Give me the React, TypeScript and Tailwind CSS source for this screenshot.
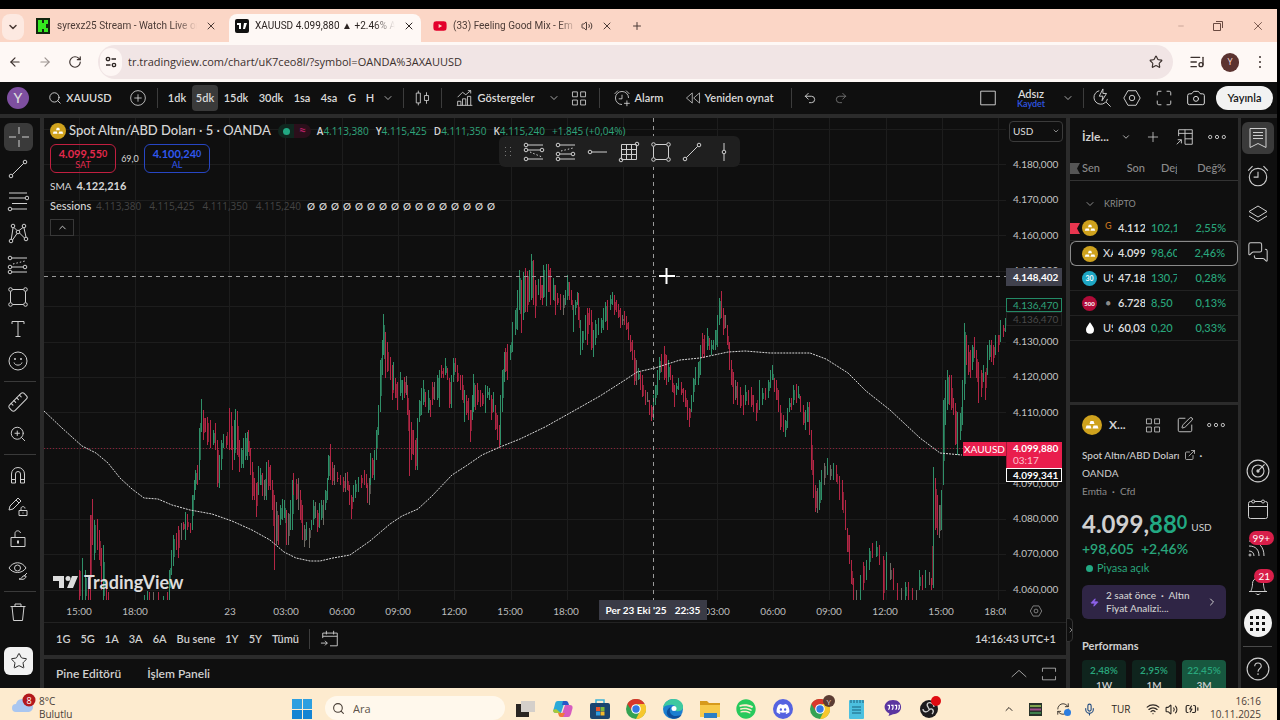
import React from "react";
import {
  ArrowLeft, ArrowRight, BatteryCharging, Camera, ChevronDown, ChevronRight, ChevronUp,
  ExternalLink, ListMusic, Maximize, MessagesSquare, Mic, Minus, Plus,
  Redo2, RefreshCw, RotateCw, Ruler, Search, SquarePen, Star, Undo2, Volume2, Wifi, X, ZoomIn, Zap,
} from "lucide-react";
import { FaDiscord, FaSpotify, FaYoutube } from "react-icons/fa";

type Dir = "g" | "r" | "n";
type Bar = [number, number, number, Dir];

// x, high, low, direction
const BARS: Bar[] = [
  [79, 570, 600, "r"], [82, 558, 600, "g"], [85, 570, 600, "g"], [88, 578, 600, "r"], [90, 515, 600, "r"], [92, 499, 545, "r"],
  [94, 520, 560, "g"], [97, 519, 550, "r"], [99, 530, 560, "r"], [101, 548, 590, "r"], [103, 545, 600, "g"], [106, 580, 600, "r"], [108, 592, 600, "r"],
  [144, 595, 600, "g"], [147, 591, 600, "g"], [149, 592, 600, "r"], [153, 592, 600, "n"], [158, 592, 600, "r"], [163, 596, 600, "g"], [167, 592, 600, "r"],
  [169, 570, 600, "g"], [171, 550, 575, "g"], [173, 535, 566, "g"], [176, 533, 550, "r"], [178, 526, 558, "r"], [181, 523, 540, "n"], [183, 522, 530, "r"],
  [185, 512, 540, "g"], [187, 514, 530, "r"], [190, 523, 533, "r"], [192, 495, 530, "g"], [194, 480, 500, "g"], [195, 470, 490, "g"], [197, 465, 485, "r"],
  [199, 428, 480, "g"], [201, 399, 432, "g"], [203, 410, 440, "r"], [205, 418, 432, "r"], [207, 417, 445, "r"], [210, 420, 448, "r"], [213, 430, 445, "g"],
  [215, 423, 450, "r"], [217, 440, 487, "r"], [219, 455, 488, "g"], [221, 440, 470, "g"], [223, 434, 448, "g"], [226, 436, 448, "r"], [229, 408, 450, "r"],
  [231, 412, 450, "r"], [232, 440, 470, "r"], [234, 420, 460, "g"], [235, 409, 450, "g"], [237, 411, 455, "r"], [239, 440, 472, "r"], [241, 448, 468, "g"],
  [243, 438, 468, "g"], [245, 433, 460, "g"], [247, 432, 460, "g"], [248, 430, 452, "r"], [250, 448, 475, "r"], [252, 462, 500, "r"], [254, 478, 500, "r"],
  [256, 483, 517, "r"], [258, 466, 495, "g"], [260, 468, 485, "g"], [262, 473, 496, "r"], [264, 480, 500, "n"], [266, 462, 500, "g"], [268, 460, 490, "r"],
  [270, 465, 490, "r"], [272, 480, 510, "r"], [274, 495, 570, "r"], [276, 502, 545, "n"], [278, 515, 545, "r"], [280, 505, 525, "g"], [282, 499, 520, "g"],
  [284, 500, 518, "g"], [286, 510, 545, "r"], [288, 513, 545, "n"], [290, 500, 530, "g"], [292, 480, 530, "g"], [293, 473, 495, "r"], [296, 479, 500, "r"],
  [298, 478, 510, "n"], [300, 490, 520, "r"], [302, 505, 540, "r"], [304, 525, 547, "n"], [306, 522, 540, "g"], [309, 528, 548, "n"], [311, 520, 530, "g"],
  [313, 500, 525, "g"], [315, 502, 518, "n"], [317, 510, 532, "r"], [319, 503, 528, "g"], [321, 500, 520, "g"], [323, 500, 525, "n"], [325, 490, 510, "g"],
  [327, 478, 500, "g"], [328, 455, 480, "g"], [330, 444, 480, "r"], [332, 462, 485, "r"], [334, 465, 485, "n"], [337, 472, 482, "r"], [340, 475, 485, "r"],
  [343, 477, 492, "r"], [345, 473, 492, "n"], [347, 472, 490, "r"], [349, 485, 505, "r"], [351, 495, 519, "r"], [353, 485, 502, "g"], [355, 480, 498, "g"],
  [358, 477, 492, "g"], [361, 475, 488, "r"], [364, 470, 485, "r"], [366, 474, 488, "r"], [367, 485, 503, "r"], [369, 478, 505, "n"], [370, 453, 485, "g"],
  [372, 458, 478, "r"], [374, 450, 480, "g"], [376, 430, 460, "g"], [378, 405, 435, "g"], [380, 360, 412, "g"], [382, 340, 375, "g"], [383, 314, 355, "g"],
  [385, 332, 378, "r"], [387, 342, 372, "r"], [390, 357, 380, "r"], [392, 365, 400, "r"], [393, 362, 390, "g"], [395, 378, 398, "r"], [397, 382, 410, "r"],
  [400, 372, 396, "g"], [402, 380, 400, "g"], [404, 377, 398, "r"], [406, 376, 395, "n"], [407, 385, 415, "r"], [409, 410, 476, "r"], [411, 422, 460, "r"],
  [413, 430, 455, "r"], [415, 440, 470, "r"], [417, 418, 470, "g"], [419, 400, 422, "g"], [421, 388, 415, "g"], [423, 380, 405, "g"], [425, 392, 407, "r"],
  [428, 390, 413, "g"], [430, 400, 417, "r"], [432, 382, 405, "r"], [434, 382, 400, "n"], [437, 375, 400, "g"], [439, 370, 407, "g"], [441, 365, 378, "r"],
  [443, 368, 378, "r"], [445, 358, 375, "g"], [447, 368, 380, "r"], [449, 378, 408, "r"], [451, 375, 408, "g"], [453, 358, 382, "g"], [455, 358, 372, "r"],
  [457, 365, 382, "r"], [460, 375, 390, "r"], [462, 375, 400, "r"], [464, 390, 422, "g"], [466, 395, 415, "r"], [468, 398, 420, "r"], [470, 410, 442, "r"],
  [472, 395, 420, "g"], [473, 374, 412, "g"], [475, 385, 410, "r"], [477, 383, 405, "r"], [480, 390, 407, "r"], [482, 393, 406, "r"], [485, 385, 413, "g"],
  [487, 386, 398, "g"], [489, 388, 400, "g"], [491, 395, 420, "r"], [493, 392, 412, "g"], [495, 405, 430, "r"], [497, 415, 440, "r"], [499, 425, 448, "r"],
  [500, 395, 445, "g"], [502, 370, 412, "g"], [504, 352, 382, "g"], [505, 348, 372, "r"], [507, 344, 380, "r"], [510, 345, 360, "g"], [512, 322, 352, "g"],
  [515, 310, 335, "g"], [517, 290, 330, "g"], [519, 270, 310, "g"], [521, 280, 333, "r"], [523, 272, 320, "g"], [525, 268, 312, "r"], [527, 271, 312, "r"],
  [529, 270, 302, "g"], [531, 254, 300, "g"], [533, 260, 305, "r"], [535, 280, 318, "r"], [538, 279, 295, "g"], [540, 277, 300, "r"], [542, 285, 305, "r"],
  [543, 265, 298, "g"], [546, 264, 306, "g"], [548, 264, 292, "r"], [550, 268, 305, "r"], [553, 278, 300, "g"], [555, 285, 315, "r"], [557, 293, 305, "r"],
  [560, 294, 310, "r"], [563, 295, 315, "n"], [565, 290, 305, "g"], [567, 275, 300, "g"], [569, 282, 300, "r"], [571, 290, 305, "r"], [573, 305, 332, "g"],
  [575, 300, 315, "g"], [577, 292, 305, "g"], [578, 293, 320, "r"], [580, 320, 355, "g"], [582, 331, 350, "g"], [585, 315, 340, "g"], [587, 308, 345, "r"],
  [589, 308, 325, "r"], [591, 310, 350, "r"], [593, 330, 357, "g"], [595, 320, 345, "g"], [598, 318, 335, "g"], [601, 318, 333, "g"], [603, 308, 330, "g"],
  [605, 302, 322, "g"], [607, 300, 330, "r"], [610, 295, 310, "g"], [612, 292, 305, "g"], [614, 295, 315, "r"], [616, 300, 312, "r"], [618, 304, 318, "r"],
  [620, 308, 328, "r"], [622, 315, 325, "n"], [624, 311, 325, "r"], [626, 316, 330, "r"], [628, 322, 340, "r"], [630, 335, 352, "r"], [632, 340, 360, "r"],
  [634, 350, 385, "r"], [636, 360, 385, "n"], [638, 368, 380, "g"], [640, 372, 390, "r"], [642, 375, 397, "r"], [645, 390, 405, "r"], [647, 392, 402, "n"],
  [649, 400, 415, "r"], [651, 405, 421, "r"], [653, 395, 420, "g"], [655, 385, 405, "g"], [657, 370, 395, "g"], [659, 357, 380, "g"], [661, 354, 372, "r"],
  [664, 346, 380, "r"], [666, 355, 385, "r"], [668, 360, 382, "g"], [670, 365, 380, "r"], [672, 375, 392, "r"], [674, 385, 407, "r"], [676, 383, 395, "g"],
  [678, 378, 390, "g"], [681, 382, 395, "r"], [683, 388, 402, "r"], [685, 390, 407, "r"], [687, 400, 420, "r"], [689, 408, 427, "r"], [691, 395, 412, "g"],
  [693, 378, 402, "g"], [695, 367, 385, "g"], [698, 362, 385, "g"], [700, 345, 375, "g"], [702, 333, 358, "r"], [704, 335, 358, "r"], [707, 328, 350, "g"],
  [709, 338, 350, "r"], [711, 340, 355, "g"], [713, 340, 350, "g"], [715, 330, 350, "g"], [717, 315, 347, "g"], [719, 298, 325, "g"], [721, 291, 318, "r"],
  [723, 308, 335, "r"], [725, 315, 328, "n"], [727, 325, 345, "r"], [729, 342, 370, "r"], [731, 360, 385, "r"], [733, 372, 404, "r"], [735, 380, 400, "n"],
  [737, 382, 405, "r"], [740, 387, 408, "r"], [743, 395, 415, "r"], [745, 385, 405, "g"], [748, 390, 405, "r"], [751, 387, 407, "r"], [753, 395, 412, "r"],
  [756, 403, 421, "r"], [759, 380, 410, "g"], [762, 388, 405, "g"], [765, 388, 400, "r"], [768, 380, 398, "g"], [770, 370, 388, "g"], [772, 365, 380, "g"],
  [774, 378, 392, "r"], [776, 380, 400, "r"], [778, 390, 412, "r"], [780, 405, 430, "r"], [783, 415, 432, "r"], [785, 420, 437, "g"], [787, 408, 428, "g"],
  [789, 398, 412, "g"], [791, 398, 410, "r"], [793, 385, 405, "g"], [796, 384, 403, "r"], [798, 386, 398, "g"], [800, 396, 412, "r"], [803, 405, 425, "r"],
  [805, 410, 430, "g"], [807, 402, 422, "g"], [809, 402, 435, "r"], [811, 430, 470, "r"], [813, 460, 498, "r"], [815, 485, 512, "r"], [817, 488, 513, "n"],
  [819, 480, 510, "g"], [821, 470, 500, "g"], [824, 463, 485, "n"], [827, 458, 475, "g"], [830, 465, 480, "n"], [833, 463, 480, "g"], [836, 465, 482, "r"],
  [839, 476, 500, "r"], [842, 480, 510, "r"], [845, 500, 530, "r"], [847, 528, 552, "r"], [849, 535, 564, "r"], [851, 560, 584, "r"], [853, 578, 600, "r"],
  [856, 590, 600, "n"], [860, 575, 600, "g"], [863, 562, 590, "r"], [866, 560, 580, "g"], [869, 548, 570, "g"], [872, 543, 558, "r"], [876, 541, 557, "g"],
  [879, 545, 565, "r"], [883, 556, 600, "r"], [886, 552, 590, "g"], [890, 563, 580, "n"], [893, 568, 590, "r"], [897, 583, 600, "r"], [901, 588, 600, "n"],
  [905, 582, 600, "g"], [908, 582, 600, "r"], [912, 588, 600, "r"], [916, 590, 600, "n"], [919, 570, 590, "g"], [922, 575, 590, "r"], [925, 570, 588, "g"],
  [929, 572, 585, "n"], [931, 578, 590, "r"], [933, 467, 588, "g"], [935, 478, 530, "r"], [937, 495, 535, "r"], [939, 505, 538, "n"], [941, 490, 530, "g"],
  [943, 400, 485, "g"], [945, 380, 425, "g"], [947, 370, 410, "g"], [949, 375, 405, "r"], [951, 375, 410, "r"], [953, 398, 415, "r"], [955, 403, 445, "r"],
  [957, 412, 455, "g"], [960, 413, 440, "g"], [962, 380, 425, "g"], [964, 323, 400, "g"], [966, 335, 365, "r"], [968, 345, 375, "r"], [970, 350, 378, "r"],
  [972, 345, 370, "g"], [974, 337, 358, "r"], [976, 350, 378, "r"], [978, 362, 403, "r"], [981, 370, 397, "r"], [983, 365, 382, "g"], [985, 372, 400, "r"],
  [987, 345, 375, "g"], [989, 340, 360, "g"], [991, 340, 362, "r"], [993, 345, 365, "r"], [995, 335, 355, "g"], [998, 335, 352, "r"], [1000, 320, 342, "g"],
  [1003, 325, 337, "r"], [1005, 318, 332, "g"],
];

const SMA =
  "M44 411L62 428L82 446L96 453L108 463L120 478L132 489L144 498L158 499L172 505L190 510L212 514L232 521L252 530L270 540L284 552L296 558L310 561L320 561L333 558L350 555L370 541L390 524L402 516L418 509L432 496L452 475L466 466L482 455L500 447L520 439L545 427L570 413L600 396L625 380L637 372L655 368L680 360L700 358L728 352L745 351L770 353L810 353L826 359L848 373L866 391L890 410L920 438L940 453L962 455";

const GRID_X = [79, 135, 229, 285, 342, 398, 454, 511, 567, 623, 717, 773, 829, 886, 942, 998];
const GRID_Y = [129, 164, 200, 235, 271, 306, 342, 377, 412, 448, 483, 519, 554, 590];
const COLORS = { g: "#2f8f68", r: "#b32645", n: "#6d6a63" };

// the blank ones are covered by a price tag
const PRICES = ["4.180,000", "4.170,000", "4.160,000", "4.150,000", "", "4.130,000", "4.120,000", "4.110,000", "", "4.090,000", "4.080,000", "4.070,000", "4.060,000"];
const TIMES = ["15:00", "18:00", "gap", "23", "03:00", "06:00", "09:00", "12:00", "15:00", "18:00", "", "gap", "03:00", "06:00", "09:00", "12:00", "15:00", "18:00"];

const Chart: React.FC = () => (
  <svg viewBox="44 118 962 482" preserveAspectRatio="none" className="block h-full w-full">
    <g stroke="#1d1d1d">
      {GRID_X.map((x) => <path key={x} d={`M${x + 0.5} 118V600`} />)}
      {GRID_Y.map((y) => <path key={y} d={`M44 ${y + 0.5}H1006`} />)}
    </g>
    <path d="M44 448.5H1006" stroke="#8c2038" strokeDasharray="1 2" />
    {BARS.map(([x, hi, lo, d], i) => {
      const next = BARS[i + 1];
      const close = next && next[0] - x < 4 ? next : null;
      return (
        <g key={i} stroke={COLORS[d]}>
          <path d={`M${x + 0.5} ${hi}V${lo}`} />
          {close && i % 2 === 0 && (
            <path d={`M${x + 1.5} ${Math.round((hi * 2 + close[1]) / 3 + 5)}V${Math.round((lo * 2 + close[2]) / 3 - 4)}`} opacity="0.7" />
          )}
        </g>
      );
    })}
    <path d={SMA} fill="none" stroke="#d8d8d8" strokeDasharray="2 1" />
    <g stroke="#9a9a9a" strokeDasharray="4 4">
      <path d="M44 276.5H1006" />
      <path d="M653.5 118V600" />
    </g>
    <path d="M666.5 268V284M659 276H675" stroke="#fff" strokeWidth="2" />
    <g fill="#dcdcdc">
      <path d="M53 576h11v12h-5v-7h-6zM72 576h6l-5 12h-6z" />
      <circle cx="68" cy="578.5" r="2.5" />
    </g>
  </svg>
);

type DrawProps = { children: React.ReactNode; size?: string };
const Draw: React.FC<DrawProps> = ({ children, size = "size-[22px]" }) => (
  <svg viewBox="0 0 22 22" fill="none" stroke="currentColor" className={size}>{children}</svg>
);

const Node: React.FC<{ x: number; y: number }> = ({ x, y }) => <circle cx={x} cy={y} r="1.8" />;

const Cross = () => <Draw><path d="M11 1v7M11 14v7M1 11h7M14 11h7" /></Draw>;
const Trend = () => <Draw><Node x={4} y={18} /><Node x={18} y={4} /><path d="M5.300 16.700L16.700 5.300" /></Draw>;
const Fib = () => <Draw><path d="M2 3h18M2 8h16M5 13.500h15M2 19h18" /><circle cx="20" cy="8" r="1.800" /><circle cx="3" cy="19" r="1.800" fill="#0f0f0f" /></Draw>;
const Pattern = () => <Draw><Node x={4} y={19} /><Node x={6} y={4} /><Node x={11} y={10} /><Node x={17} y={4} /><Node x={19} y={17} /><path d="M4.300 17L6 6M7 5.500L10 8.500M12 8.500L16 5.500M17 6L19 15M5.500 18L10 11.500M12.500 11L17.500 16" /></Draw>;
const Position = () => <Draw><Node x={3} y={4} /><Node x={3} y={13} /><Node x={18} y={13} /><Node x={3} y={18} /><path d="M5 4h15M5 13h11M5 18h15" /><path d="M6 10L18 7" strokeDasharray="1.500 2" /></Draw>;
const LongPos = () => <Draw><Node x={3} y={4} /><Node x={3} y={9} /><Node x={19} y={9} /><Node x={3} y={18} /><path d="M5 4h15M5 9h12M5 18h15" /><path d="M7 11L19 16" strokeDasharray="1.500 2" /></Draw>;
const Rect = () => <Draw><Node x={3.5} y={3.5} /><Node x={18.5} y={3.5} /><Node x={3.5} y={18.5} /><Node x={18.5} y={18.5} /><path d="M5.500 3.500h11M5.500 18.500h11M3.500 5.500v11M18.500 5.500v11" /></Draw>;
const TextTool = () => <Draw><path d="M5 6V3.500h12V6M11 3.500v15M8.500 18.500h5" /></Draw>;
const Smile = () => <Draw><circle cx="11" cy="11" r="9" /><path d="M7 12.500c1 3.500 7 3.500 8 0" /><path d="M8 8v2M14 8v2" strokeWidth="1.500" /></Draw>;
const MagnetTool = () => <Draw><path d="M4.500 19V10a6.500 6.500 0 0 1 13 0v9h-4v-9a2.500 2.500 0 0 0-5 0v9zM4.500 15.500h4M13.500 15.500h4" /></Draw>;
const PencilLock = () => <Draw><path d="M2 14l1-4 8-8 3 3-8 8zM9 4l3 3M12 14.500h8v5h-8zM14 14.500v-2c0-2.500 4-2.500 4 0M16 16.500v1" /></Draw>;
const Unlock = () => <Draw><path d="M4 9.500h14v9H4zM8 9.500V5.500c0-3.500 5-3.500 5.500-.5" /><path d="M11 12.500v3" strokeWidth="2" /></Draw>;
const EyeBrush = () => <Draw><path d="M2 8c4-7 13-7 17 0-4 6-13 6-17 0z" /><circle cx="10.500" cy="8" r="3" /><path d="M12 19c3 0 3-2 4-3l3 0c0 3-3 4-7 3zM17 16l3-3" /></Draw>;
const Trash = () => <Draw><path d="M3.500 5.500h15M8 5.500V3h6v2.500M5 5.500l1.500 14h9l1.500-14" /></Draw>;
const Hexagon = ({ size = "size-5" }: { size?: string }) => <Draw size={size}><path d="M6.500 3h9l4.500 8-4.500 8h-9L2 11z" /><circle cx="11" cy="11" r="3" /></Draw>;
const Squares = () => <Draw size="size-[18px]"><path d="M3 3.500h6v6H3zM13 3.500h6v6h-6zM3 13.500h6v6H3zM13 13.500h6v6h-6z" /></Draw>;
const Dots = () => <Draw size="size-5"><Node x={3.5} y={11} /><Node x={11} y={11} /><Node x={18.5} y={11} /></Draw>;
const Candles = () => <Draw size="size-[18px]"><path d="M4 5h5v12H4zM6.500 2v3M6.500 17v3M14 8h5v6h-5zM16.500 4v4M16.500 14v4" /></Draw>;
const Indicators = () => <Draw size="size-[18px]"><path d="M2 20v-5h4v5M8 20v-8h4v8M14 20V9h4v11M1 20h19M2 10l6-6 4 3 6-5M14.500 2H18v3.500" /></Draw>;
const Alarm = ({ size = "size-5" }: { size?: string }) => <Draw size={size}><circle cx="11" cy="12" r="8" /><path d="M11 7v5H7M2 6l4-4M16 2l4 4" /></Draw>;
const Rewind = () => <Draw size="size-4"><path d="M10 4v14L2 11zM20 4v14l-8-7z" /></Draw>;
const GridBox = () => <Draw><path d="M3.500 3.500h15v15h-15zM8.500 3.500v15M13.500 3.500v15M3.500 8.500h15M3.500 13.500h15" /><circle cx="19" cy="3" r="1.800" /><circle cx="3" cy="19" r="1.800" /></Draw>;
const Ray = () => <Draw><Node x={4} y={11} /><path d="M6 11h15" /></Draw>;
const VLine = () => <Draw><Node x={11} y={11} /><path d="M11 2v7M11 13v7" /></Draw>;
const Watch = () => <Draw><path d="M3 1.500h16v19l-8-4-8 4zM6 5.500h10M6 8.500h10M6 11.500h10" /></Draw>;
const TwoLayers = () => <Draw><path d="M11 3l9 5.500-9 5.500-9-5.500zM2 13l9 5.500 9-5.500" /></Draw>;
const Radar = () => <Draw size="size-6"><circle cx="11" cy="11" r="10" /><circle cx="11" cy="11" r="5.500" /><circle cx="11" cy="11" r="1" fill="currentColor" /><path d="M12 10L17 5" /></Draw>;
const RingCalendar = () => <Draw><path d="M5 3.500H3.500a2 2 0 0 0-2 2v13a2 2 0 0 0 2 2h15a2 2 0 0 0 2-2v-13a2 2 0 0 0-2-2H18M7.500 3.500h7M1.500 8.500h19" /><circle cx="6.200" cy="3.500" r="1.500" /><circle cx="16" cy="3.500" r="1.500" /></Draw>;
const BellTool = () => <Draw><path d="M2 17.500h18M4 17.500c0-2 1.500-3 1.500-8a5.500 5.500 0 0 1 11 0c0 5 1.500 6 1.500 8M9 19.500c.5 1.500 3.500 1.500 4 0" /></Draw>;
const Feed = () => <Draw><path d="M2 5c10 0 15 6 15 15M2 10c7 0 10 4 10 10M2 15c3 0 5 2 5 5" /><circle cx="3" cy="19" r="1" /></Draw>;
const Question = () => <Draw size="size-6"><circle cx="11" cy="11" r="10" /><path d="M8 8.500c0-4 6-4 6 0 0 2-3 2-3 5M11 15v1.500" /></Draw>;
const TableImport = () => <Draw size="size-5"><path d="M4 10V3h15v16h-8M4 7h15M11 3v16M11 13h8M2 19l5-5M3 14h4v4" /></Draw>;
const CalendarGo = () => <Draw size="size-5"><path d="M3 10V4.500h16v14h-8M3 8h16M7 2v4M15 2v4M1 15.500h7M5.500 13L8 15.500 5.500 18" /></Draw>;
const QuickSearch = () => <Draw size="size-5"><path d="M8 3a7.500 7.500 0 1 0 9 9M15.500 15.500l5 5M12 1L8 9h4l-1 5 5-8h-4z" /></Draw>;
const Gold = ({ size = "size-4" }: { size?: string }) => (
  <svg viewBox="0 0 20 20" className={size}>
    <circle cx="10" cy="10" r="10" fill="#cfa21d" />
    <path d="M7.500 9l1-3h3l1 3zM3.500 13.500l1-3h4l1 3zM10.500 13.500l1-3h4l1 3z" fill="#fff" />
  </svg>
);

const Chrome = () => (
  <svg viewBox="0 0 20 20" className="size-5">
    <circle cx="10" cy="10" r="10" fill="#34a353" />
    <path d="M1.300 5A10 10 0 0 1 18.700 5H10L6 12z" fill="#d8372b" />
    <path d="M18.700 5A10 10 0 0 1 10 20l4-8-2-7z" fill="#f7c72c" />
    <circle cx="10" cy="10" r="4.800" fill="#fff" /><circle cx="10" cy="10" r="3.700" fill="#3478e5" />
  </svg>
);
const Explorer = () => <svg viewBox="0 0 20 20" className="size-5"><path d="M0 2h7l2 2h11v4H0z" fill="#d79a1c" /><path d="M0 6h20v12H0z" fill="#f7c94a" /><path d="M4 14h13v5H4z" fill="#2d7fc4" /></svg>;
const Edge = () => (
  <svg viewBox="0 0 20 20" className="size-5">
    <circle cx="10" cy="10" r="10" fill="#1c7fd0" />
    <path d="M0 9C1 2 7 0 11 0c6 0 10 5 9 9-1 4-7 4-8 2 2-3-1-6-5-5-3 0-6 1-7 3z" fill="#3ec9a0" />
    <path d="M8 8c-3 4 0 9 5 9 3 0 5-1 6-2-3 6-10 6-14 2-3-4 0-8 3-9z" fill="#0e4f9c" />
    <circle cx="11" cy="9.500" r="2.500" fill="#fff" />
  </svg>
);
const Copilot = () => (
  <svg viewBox="0 0 20 20" className="size-5">
    <path d="M5 2h7l-4 12H3c-3 0-3-3-2-5l1-4c.5-2 1-3 3-3z" fill="#2aa9d8" />
    <path d="M0 11l3-1 5 4H3c-2 0-3-1-3-3z" fill="#a9c93a" /><path d="M10 2h3c2 0 2 1 3 4H9z" fill="#2759c7" />
    <path d="M12 6h5c3 0 3 3 2 5l-1 4c-1 2-1 3-3 3H8z" fill="#d65cc0" /><path d="M8 14l4 0-2 4H8c-2 0-2-1-3-4z" fill="#f2793b" />
  </svg>
);
const Store = () => <svg viewBox="0 0 20 20" className="size-5"><path d="M6 5V1h8v4" fill="none" stroke="#3cb3d8" strokeWidth="1.500" /><rect y="4" width="20" height="16" rx="2" fill="#1b446f" /><path d="M6 8h4v4H6z" fill="#e8542c" /><path d="M10.500 8h4v4h-4z" fill="#7db43a" /><path d="M6 12.500h4v4H6z" fill="#2f9be0" /><path d="M10.500 12.500h4v4h-4z" fill="#f3b72b" /></svg>;
const Notepad = () => <svg viewBox="0 0 20 20" className="size-5"><rect x="3" y="1" width="15" height="19" rx="1" fill="#4cc0df" /><path d="M5 1v3M8 1v3M11 1v3M14 1v3M17 1v3" stroke="#1c5f7c" /><path d="M6 8h9M6 11h9M6 14h9" stroke="#16627e" /></svg>;
const Obs = () => (
  <svg viewBox="0 0 22 22" className="size-[22px]">
    <circle cx="10" cy="13" r="9" fill="#1d1b1e" />
    <path d="M9 7c-3 3 2 5 1 7-2 3-6 2-6-1M10 14c3-3 6 1 3 4M9 7c3-1 6 1 6 4" fill="none" stroke="#cfcfcf" strokeWidth="1.300" />
    <circle cx="17" cy="5" r="5" fill="#e00b12" />
  </svg>
);
const Quote = () => <svg viewBox="0 0 20 20" className="size-[18px]"><path d="M10 1c12 0 12 16 0 16l-5 2 1-3C-3 12 0 1 10 1z" fill="#5b35a0" /><path d="M4 7h2v3l-1 2M8 7h2v3l-1 2M12 7h2v3l-1 2M16 7h1v3l-1 2" stroke="#fff" strokeWidth="1.300" fill="none" /></svg>;

const Sep = () => <div className="flex w-[10px] justify-center"><div className="h-5 w-px bg-[#3c3c3c]" /></div>;

type CellProps = { w: string; label?: string; children: React.ReactNode };
const Cell: React.FC<CellProps> = ({ w, label, children }) => (
  <button aria-label={label} className={`${w} flex h-7 shrink-0 items-center justify-center gap-1 rounded`}>{children}</button>
);

const TabTitle: React.FC<{ w: string; children: React.ReactNode }> = ({ w, children }) => (
  <span className={`${w} overflow-hidden font-['Roboto',sans-serif] text-[10px] leading-5 whitespace-nowrap [mask-image:linear-gradient(to_right,black_85%,transparent)]`}>{children}</span>
);

const BrowserBar: React.FC = () => (
  <header className="shrink-0 bg-[#fbd6c6] font-['Open_Sans',sans-serif] text-[10px] text-[#4b3b36]">
    <div className="flex h-[33px] items-end">
      <div className="flex h-7 w-[26px] items-start pl-[2px]">
        <button aria-label="Sekme ara" className="flex h-[26px] w-[22px] items-center justify-center rounded-lg bg-[#fde9e1]"><ChevronDown className="size-3" strokeWidth={3} /></button>
      </div>
      <div className="flex h-7 w-[203px] items-start pt-[2px] pl-[10px]">
        <svg viewBox="0 0 14 16" className="mt-[2px] h-4 w-[14px]"><path d="M0 0h14v16H0z" fill="#13250e" /><path d="M2 2h4v3h2V2h4v4h-2v4h2v4H8v-3H6v3H2z" fill="#35e81f" /></svg>
        <span className="w-[7px]" />
        <TabTitle w="w-[140px]">syrexz25 Stream - Watch Live on</TabTitle>
        <button aria-label="Kapat" className="ml-2 h-5"><X className="size-3" /></button>
      </div>
      <div className="flex h-7 w-[192px] items-start rounded-t-lg bg-[#fef8f5] pt-[2px] pl-[6px] text-[#2c2422]">
        <svg viewBox="0 0 14 14" className="mt-[3px] size-[14px]"><rect width="14" height="14" rx="2" fill="#111" /><path d="M2 4h4v6H4V6H2zM9 4h3l-2 6H8z" fill="#fff" /></svg>
        <span className="w-[6px]" />
        <TabTitle w="w-[140px]">XAUUSD 4.099,880 ▲ +2.46% A</TabTitle>
        <button aria-label="Kapat" className="ml-2 h-5"><X className="size-3" /></button>
      </div>
      <div className="flex h-7 w-[204px] items-start pt-[2px] pl-3">
        <FaYoutube className="mt-[3px] size-[14px] text-[#e3002b]" />
        <span className="w-[6px]" />
        <TabTitle w="w-[124px]">(33) Feeling Good Mix - Em</TabTitle>
        <span className="ml-1 flex h-5 items-center"><Volume2 className="size-3" /></span>
        <button aria-label="Kapat" className="ml-2 h-5"><X className="size-3" /></button>
      </div>
      <div className="flex h-7 items-start pt-[2px]"><button aria-label="Yeni sekme" className="ml-[6px] h-5"><Plus className="size-3" /></button></div>
      <div className="ml-auto flex h-full w-[114px] items-center justify-between pr-3 pl-[14px] text-[#6a4a40]">
        <Minus className="size-2 opacity-50" />
        <svg viewBox="0 0 10 10" fill="none" stroke="currentColor" className="size-[10px]"><path d="M.5 2.500h7v7h-7zM3 .5h6.500V7" /></svg>
        <X className="size-[14px]" strokeWidth={1.5} />
      </div>
    </div>
    <div className="flex h-10 items-center bg-[#fef8f5] pr-3 pl-2 text-[#3b302d]">
      <button aria-label="Geri" className="w-[30px]"><ArrowLeft className="size-[14px]" /></button>
      <button aria-label="İleri" className="w-[30px] opacity-50"><ArrowRight className="size-[14px]" /></button>
      <button aria-label="Yenile" className="w-[30px]"><RotateCw className="size-[14px]" /></button>
      <div className="flex h-[34px] flex-1 items-center rounded-full bg-[#f1e5e5] px-[2px]">
        <span className="flex h-7 w-[22px] items-center justify-center rounded-full bg-[#fdf6f4]">
          <svg viewBox="0 0 12 12" fill="none" stroke="#2c2422" strokeWidth="1.300" className="size-3"><circle cx="3" cy="3" r="1.700" /><path d="M6.500 3H11M1 9h4.500" /><circle cx="9" cy="9" r="1.700" /></svg>
        </span>
        <input aria-label="Adres" defaultValue="tr.tradingview.com/chart/uK7ceo8l/?symbol=OANDA%3AXAUUSD" className="ml-[6px] flex-1 bg-transparent text-[11px] outline-none" />
        <Star className="mr-2 size-[14px]" />
      </div>
      <div className="flex items-center gap-4 pl-4 text-[#3b302d]">
        <ListMusic className="size-4" />
        <span className="flex h-[19px] w-[18px] items-center justify-center rounded-full bg-[#5b3330] text-[9px] text-[#f4dcd6]">Y</span>
        <span className="flex w-[10px] flex-col items-center gap-[3px]">
          <i className="size-[2px] rounded-full bg-[#3b302d]" /><i className="size-[2px] rounded-full bg-[#3b302d]" /><i className="size-[2px] rounded-full bg-[#3b302d]" />
        </span>
      </div>
    </div>
  </header>
);

const TopToolbar: React.FC = () => (
  <div className="flex h-8 shrink-0 items-center bg-[#0f0f0f] pr-1 text-[11px] font-semibold text-[#dbdbdb]">
    <div className="flex w-9 shrink-0 justify-center"><span className="flex size-[22px] items-center justify-center rounded-full bg-[#7e4fa0] text-sm font-medium">Y</span></div>
    <Cell w="w-[88px]"><Search className="size-[14px]" strokeWidth={1.5} />XAUUSD</Cell>
    <Cell w="w-7" label="Ekle"><Draw size="size-[18px]"><circle cx="11" cy="11" r="9" /><path d="M11 6.500v9M6.500 11h9" /></Draw></Cell>
    <Sep />
    <Cell w="w-[30px]">1dk</Cell>
    <button className="h-[26px] w-[26px] rounded bg-[#3a3a3a]">5dk</button>
    <Cell w="w-[36px]">15dk</Cell>
    <Cell w="w-[34px]">30dk</Cell>
    <Cell w="w-[28px]">1sa</Cell>
    <Cell w="w-[26px]">4sa</Cell>
    <Cell w="w-[20px]">G</Cell>
    <Cell w="w-[16px]">H</Cell>
    <Cell w="w-[20px]" label="Aralıklar"><ChevronDown className="size-3" strokeWidth={1.5} /></Cell>
    <Sep />
    <Cell w="w-[28px]" label="Mumlar"><Candles /></Cell>
    <Sep />
    <Cell w="w-[98px]"><Indicators />Göstergeler</Cell>
    <Cell w="w-[20px]" label="Favoriler"><ChevronDown className="size-3" strokeWidth={1.5} /></Cell>
    <Cell w="w-[30px]" label="Şablonlar"><Squares /></Cell>
    <Sep />
    <Cell w="w-[68px]"><Draw size="size-[18px]"><path d="M19 11a8 8 0 1 0-8 8M11 7v5H7M2 6l4-4M16 2l4 4M17 14v7M13.500 17.500h7" /></Draw>Alarm</Cell>
    <Cell w="w-[114px]"><Rewind />Yeniden oynat</Cell>
    <Sep />
    <Cell w="w-[28px]" label="Geri al"><Undo2 className="size-[14px]" strokeWidth={1.5} /></Cell>
    <Cell w="w-[34px]" label="Yinele"><Redo2 className="size-[14px] opacity-50" strokeWidth={1.5} /></Cell>
    <div className="flex-1" />
    <Cell w="w-8" label="Düzen"><Draw size="size-5"><path d="M3 3.500h16v15H3z" /></Draw></Cell>
    <button className="w-[54px] leading-[11px]">Adsız<span className="block text-[9px] leading-[9px] text-[#2f55e0]">Kaydet</span></button>
    <Cell w="w-[20px]" label="Düzenler"><ChevronDown className="size-3" strokeWidth={1.5} /></Cell>
    <Sep />
    <Cell w="w-[28px]" label="Hızlı arama"><QuickSearch /></Cell>
    <Cell w="w-8" label="Ayarlar"><Hexagon /></Cell>
    <Cell w="w-8" label="Tam ekran"><Maximize className="size-[18px]" strokeWidth={1.2} /></Cell>
    <Cell w="w-8" label="Görüntü"><Camera className="size-5" strokeWidth={1.2} /></Cell>
    <button className="ml-1 h-6 w-[57px] rounded-full bg-[#f2f2f2] text-[#151515]">Yayınla</button>
  </div>
);

const ToolButton: React.FC<{ label: string; children: React.ReactNode }> = ({ label, children }) => (
  <button aria-label={label} className="flex h-8 w-9 shrink-0 items-center justify-center">{children}</button>
);
const Rule = () => <div className="mx-1 my-1 h-px shrink-0 bg-[#3a3a3a]" />;

const LeftTools: React.FC = () => (
  <nav className="flex w-10 shrink-0 flex-col bg-[#0f0f0f] pt-[3px] pb-[13px] text-[#d0d0d0]">
    <button aria-label="İmleç" className="mx-1 my-[2px] flex h-7 w-[29px] shrink-0 items-center justify-center rounded-md bg-[#3a3a3a]"><Cross /></button>
    <ToolButton label="Trend"><Trend /></ToolButton>
    <ToolButton label="Fibonacci"><Fib /></ToolButton>
    <ToolButton label="Desen"><Pattern /></ToolButton>
    <ToolButton label="Tahmin"><Position /></ToolButton>
    <ToolButton label="Şekil"><Rect /></ToolButton>
    <ToolButton label="Metin"><TextTool /></ToolButton>
    <ToolButton label="İfade"><Smile /></ToolButton>
    <Rule />
    <ToolButton label="Ölç"><Ruler className="size-[22px] -scale-x-100" strokeWidth={1.1} /></ToolButton>
    <ToolButton label="Yakınlaştır"><ZoomIn className="size-[18px]" strokeWidth={1.3} /></ToolButton>
    <Rule />
    <ToolButton label="Mıknatıs"><MagnetTool /></ToolButton>
    <ToolButton label="Çizim modu"><PencilLock /></ToolButton>
    <ToolButton label="Kilitle"><Unlock /></ToolButton>
    <ToolButton label="Gizle"><EyeBrush /></ToolButton>
    <Rule />
    <ToolButton label="Sil"><Trash /></ToolButton>
    <button aria-label="Favoriler" className="mt-auto ml-1 flex h-7 w-[29px] items-center justify-center rounded-md bg-[#f2f2f2] text-[#222]"><Star className="size-[18px]" strokeWidth={1.3} /></button>
  </nav>
);

const OHLC = [["A", "4.113,380"], ["Y", "4.115,425"], ["D", "4.111,350"], ["K", "4.115,240"]];

const Legend: React.FC = () => (
  <div className="absolute top-0 left-[6px] flex flex-col text-[10px] text-[#d6d6d6]">
    <div className="flex h-[26px] items-center">
      <Gold />
      <h1 className="ml-[3px] text-[13px] font-medium whitespace-nowrap">Spot Altın/ABD Doları · 5 · OANDA</h1>
      <span className="ml-[7px] flex h-[14px] w-[33px] overflow-hidden rounded-full text-[11px] leading-[13px]">
        <span className="flex w-1/2 items-center justify-center bg-[#10271f]"><i className="size-[7px] rounded-full bg-[#22a983]" /></span>
        <span className="w-1/2 bg-[#2b0f1b] text-center text-[13px] font-bold text-[#b01f62]">≈</span>
      </span>
      <p className="ml-[6px] flex gap-[7px] font-['Open_Sans',sans-serif] text-[#2fa57c]">
        {OHLC.map(([k, v]) => <span key={k}><b className="font-semibold text-[#d6d6d6]">{k}</b>{v}</span>)}
        <span>+1.845 (+0,04%)</span>
      </p>
    </div>
    <div className="flex items-center">
      <button className="h-[29px] w-[66px] rounded-md border border-[#c11f40] text-[11px] leading-[11px] font-bold text-[#e3294d]">4.099,55<span className="align-[1px] text-[9px]">0</span><span className="block text-[9px] font-normal">SAT</span></button>
      <span className="w-[28px] text-center text-[9px]">69,0</span>
      <button className="h-[29px] w-[66px] rounded-md border border-[#2746c4] text-[11px] leading-[11px] font-bold text-[#2f58f0]">4.100,24<span className="align-[1px] text-[9px]">0</span><span className="block text-[9px] font-normal">AL</span></button>
    </div>
    <div className="mt-[3px] flex h-5 items-center gap-[5px]">SMA <b className="text-[11px]">4.122,216</b></div>
    <div className="flex h-5 items-center">
      <span className="w-[46px] text-[11px] font-medium">Sessions</span>
      <span className="flex gap-2 font-['Open_Sans',sans-serif] text-[#444]">{OHLC.map(([k, v]) => <span key={k}>{v}</span>)}</span>
      <span className="ml-1 flex">{Array.from({ length: 16 }, (_, i) => <span key={i} className="w-[12px] text-center font-semibold">Ø</span>)}</span>
    </div>
    <button aria-label="Göstergeleri gizle" className="mt-[3px] flex h-[17px] w-6 items-center justify-center border border-[#383838]"><ChevronUp className="size-[11px]" /></button>
  </div>
);

const FloatingTools: React.FC = () => (
  <div className="absolute top-[18px] left-[455px] flex h-[31px] w-[241px] items-center rounded-md bg-[#1f1f1f] text-[#cfcfcf]">
    <svg viewBox="0 0 8 12" className="ml-[5px] h-3 w-2" fill="#777"><path d="M1 1h1v1H1zM6 1h1v1H6zM1 5h1v1H1zM6 5h1v1H6zM1 9h1v1H1zM6 9h1v1H6z" /></svg>
    <div className="flex flex-1 justify-around pl-[6px]">
      {[LongPos, Position, Ray, GridBox, Rect, Trend, VLine].map((Icon, i) => <button key={i} aria-label={`Araç ${i + 1}`}><Icon /></button>)}
    </div>
  </div>
);

const PriceScale: React.FC = () => (
  <div className="relative w-15 shrink-0 text-[10px] text-[#c4c4c4]">
    <div className="flex h-full flex-col justify-between pt-[38px] pb-[3px] pl-[7px]">
      {PRICES.map((p, i) => <span key={i} className="h-4 leading-4">{p}</span>)}
    </div>
    <div className="absolute top-[3px] left-[3px]">
      <select aria-label="Para birimi" className="h-[21px] w-[54px] appearance-none rounded border border-[#3b3b3b] bg-[#0f0f0f] pl-[3px] text-[10px] text-[#dcdcdc]"><option>USD</option></select>
      <ChevronDown className="pointer-events-none absolute top-[6px] right-[3px] size-2" />
    </div>
    <span className="absolute top-[150px] left-0 h-[18px] w-14 bg-[#40414d] pl-[7px] leading-[18px] font-bold text-white">4.148,402</span>
    <span className="absolute top-[180px] left-0 h-[14px] w-14 border border-[#238a66] bg-[#0f0f0f] pl-[6px] leading-3 text-[#2fa57c]">4.136,470</span>
    <span className="absolute top-[194px] left-0 h-[14px] w-14 border border-[#222] bg-[#0f0f0f] pl-[6px] leading-3 text-[#4a4a4a]">4.136,470</span>
    <div className="absolute top-[324px] right-1 flex text-white">
      <span className="h-[14px] w-[43px] bg-[#e91e4d] text-center leading-[14px]">XAUUSD</span>
      <span className="h-[26px] w-14 border-l border-[#a4183a] bg-[#e91e4d] pl-[6px] leading-3 font-bold">4.099,880<span className="block font-normal text-[#ffc1cf]">03:17</span></span>
    </div>
    <span className="absolute top-[350px] left-0 h-[14px] w-14 border border-white bg-[#0f0f0f] pl-[6px] leading-3 font-bold text-white">4.099,341</span>
  </div>
);

const ChartPanel: React.FC = () => (
  <main className="flex min-w-0 flex-1 flex-col bg-[#0f0f0f]">
    <div className="flex min-h-0 flex-1">
      <div className="relative min-w-0 flex-1">
        <Chart />
        <Legend />
        <FloatingTools />
        <span className="absolute bottom-2 left-[40px] text-[18px] leading-5 font-bold text-[#dcdcdc]">TradingView</span>
      </div>
      <PriceScale />
    </div>
    <div className="relative flex h-[23px] shrink-0 border-b border-[#222] text-[10px] leading-[23px] text-[#bdbdbd]">
      <div className="flex min-w-0 flex-1 overflow-hidden pl-[7px]">
        {TIMES.map((t, i) => t === "gap" ? <span key={i} className="w-[39px] shrink-0" /> : <span key={i} className="w-[56px] shrink-0 text-center">{t}</span>)}
      </div>
      <button aria-label="Ölçek ayarları" className="flex w-15 items-center justify-center"><Hexagon size="size-[14px]" /></button>
      <span className="absolute top-0 left-[555px] flex h-5 w-[108px] justify-center gap-2 bg-[#3a3b46] leading-5 font-bold whitespace-nowrap text-white"><span>Per 23 Eki '25</span><span>22:35</span></span>
    </div>
    <div className="flex h-8 shrink-0 items-center gap-[10px] pr-[10px] pl-3 text-[11px] font-semibold text-[#d0d0d0]">
      {["1G", "5G", "1A", "3A", "6A", "Bu sene", "1Y", "5Y", "Tümü"].map((r) => <button key={r}>{r}</button>)}
      <div className="h-5 w-px bg-[#3c3c3c]" />
      <button aria-label="Tarihe git"><CalendarGo /></button>
      <span className="ml-auto">14:16:43 UTC+1</span>
    </div>
    <div className="h-1 shrink-0 bg-[#2b2b2b]" />
    <div className="flex h-[29px] shrink-0 items-center gap-[26px] pr-[9px] pl-3 text-xs font-semibold text-[#d0d0d0]">
      <button>Pine Editörü</button>
      <button>İşlem Paneli</button>
      <button aria-label="Aç" className="ml-auto"><Draw size="size-4"><path d="M1 15L11 6l10 9" /></Draw></button>
      <button aria-label="Büyüt" className="-ml-3"><Draw size="size-4"><path d="M2 8V3h18v5M2 14v5h18v-5" /></Draw></button>
    </div>
  </main>
);

const ROWS = [
  { icon: <Gold />, name: "G", last: "4.112", chg: "102,1", pct: "2,55%", flag: true, small: true },
  { icon: <Gold />, name: "XA", last: "4.099", chg: "98,60", pct: "2,46%", active: true },
  { icon: <span className="flex size-[15px] items-center justify-center rounded-full bg-[#1ea6c4] text-[7px] font-bold text-white">30</span>, name: "US", last: "47.18", chg: "130,7", pct: "0,28%" },
  { icon: <span className="flex size-[15px] items-center justify-center rounded-full bg-[#b00b38] text-[6px] font-bold text-white">500</span>, name: "•", last: "6.728", chg: "8,50", pct: "0,13%", dot: true },
  { icon: <svg viewBox="0 0 14 14" className="size-4"><path d="M7 2c2 3 3.500 4.500 3.500 6.500a3.500 3.500 0 0 1-7 0C3.500 6.500 5 5 7 2z" fill="#fff" /></svg>, name: "US", last: "60,03", chg: "0,20", pct: "0,33%" },
];

const Watchlist: React.FC = () => (
  <section className="h-[284px] shrink-0">
    <div className="flex h-[38px] items-center pl-3 text-[#cfcfcf]">
      <h2 className="w-[34px] text-xs font-bold">İzle...</h2>
      <button aria-label="Listeler" className="flex w-5 justify-center"><ChevronDown className="size-[10px]" /></button>
      <button aria-label="Sembol ekle" className="flex w-[34px] justify-center"><Plus className="size-4" strokeWidth={1.2} /></button>
      <button aria-label="Tablo" className="flex w-[30px] justify-center"><TableImport /></button>
      <button aria-label="Daha fazla" className="flex w-[34px] justify-center"><Dots /></button>
    </div>
    <table className="w-full table-fixed border-separate border-spacing-0 text-[11px] whitespace-nowrap">
      <colgroup><col className="w-3" /><col className="w-[19px]" /><col className="w-[15px]" /><col className="w-[29px]" /><col className="w-[32px]" /><col /></colgroup>
      <thead>
        <tr className="h-[25px] text-[#8b8b8b]">
          <th className="border-b border-[#333] p-0"><svg viewBox="0 0 10 11" className="h-[11px] w-[10px]"><path d="M0 0h10L7 5.500 10 11H0z" fill="#555" /></svg></th>
          <th className="overflow-hidden border-b border-[#333] p-0 text-left font-medium">Sen</th>
          <th className="border-b border-[#333] p-0" />
          <th className="overflow-hidden border-b border-[#333] p-0 text-right font-medium">Son</th>
          <th className="border-b border-[#333] p-0 pl-4 text-left font-medium"><span className="block overflow-hidden">Değ</span></th>
          <th className="border-b border-[#333] p-0 pr-3 text-right font-medium">Değ%</th>
        </tr>
      </thead>
      <tbody>
        <tr className="h-[35px]"><td colSpan={6} className="border-b border-transparent p-0 pt-[11px] pl-[14px] text-[9px] text-[#8b8b8b]"><ChevronDown className="mr-2 inline size-3" />KRİPTO</td></tr>
        {ROWS.map((r, i) => {
          const line = r.active ? "border-y border-[#8a8a8a]" : "border-b border-[#222]";
          return (
            <tr key={i} className="h-[25px] text-[11px] font-medium text-[#29a67c]">
              <td className={`${line} p-0 ${r.active ? "rounded-l-md border-l" : ""}`}>{r.flag && <svg viewBox="0 0 10 11" className="h-[11px] w-[10px]"><path d="M0 0h10L7 5.500 10 11H0z" fill="#e8364f" /></svg>}</td>
              <td className={`${line} p-0`}>{r.icon}</td>
              <td className={`${line} p-0 ${r.small ? "pb-1 pl-1 text-[9px] text-[#c8741e]" : r.dot ? "pl-1 text-[#8b8b8b]" : "pl-[2px] text-[#d8d8d8]"}`}><span className="block w-[10px] overflow-hidden">{r.name}</span></td>
              <td className={`${line} p-0 pl-[2px] font-semibold text-[#e0e0e0]`}><span className="block w-[27px] overflow-hidden">{r.last}</span></td>
              <td className={`${line} p-0 pl-[6px]`}><span className="block w-[26px] overflow-hidden">{r.chg}</span></td>
              <td className={`${line} p-0 pr-3 text-right ${r.active ? "rounded-r-md border-r" : ""}`}>{r.pct}</td>
            </tr>
          );
        })}
      </tbody>
    </table>
  </section>
);

const PERF = [
  { v: "2,48%", l: "1W", bg: "bg-[#0f241d]" },
  { v: "2,95%", l: "1M", bg: "bg-[#0f241d]" },
  { v: "22,45%", l: "3M", bg: "bg-[#17573f]" },
];

const Details: React.FC = () => (
  <section className="min-h-0 flex-1 overflow-hidden border-t-[3px] border-[#2b2b2b] px-3 text-[10px] text-[#d0d0d0]">
    <div className="-mr-3 flex h-10 items-center">
      <Gold size="size-5" />
      <h2 className="ml-[7px] w-[29px] text-xs font-bold">X...</h2>
      <button aria-label="Benzerler" className="flex w-[30px] justify-center"><Squares /></button>
      <button aria-label="Not" className="flex w-[33px] justify-center"><SquarePen className="size-[18px]" strokeWidth={1.2} /></button>
      <button aria-label="Daha fazla" className="flex w-[30px] justify-center"><Dots /></button>
    </div>
    <p className="flex items-center gap-1 pt-[1px] leading-[18px] font-medium whitespace-nowrap">Spot Altın/ABD Doları <ExternalLink className="size-3" strokeWidth={1.5} /> <b>·</b></p>
    <p className="leading-[18px]">OANDA</p>
    <p className="leading-[18px] text-[#8b8b8b]">Emtia&nbsp; <b>·</b> &nbsp;Cfd</p>
    <p className="mt-[9px] flex items-end text-2xl leading-[30px] font-bold whitespace-nowrap">4.099,<span className="text-[#22a983]">88<span className="align-[4px] text-lg leading-4">0</span></span><span className="ml-1 text-[10px] leading-6 font-normal">USD</span></p>
    <p className="text-sm leading-5 font-semibold text-[#29a67c]">+98,605&nbsp; +2,46%</p>
    <p className="flex items-center gap-1 pl-1 text-[11px] leading-[18px] text-[#29a67c]"><i className="size-[7px] rounded-full bg-[#22a983]" />Piyasa açık</p>
    <button className="mt-2 flex h-[34px] w-full items-center rounded-md bg-[#2f2545] px-2 text-left text-[10px] leading-[13px]">
      <Zap className="mr-[7px] size-[9px] fill-[#8d62e8] text-[#8d62e8]" /><span className="flex-1 font-medium">2 saat önce&nbsp; <b>·</b> &nbsp;Altın<br />Fiyat Analizi:...</span><ChevronRight className="size-3" />
    </button>
    <h3 className="mt-[18px] text-[11px] leading-[18px] font-bold">Performans</h3>
    <div className="mt-[5px] grid grid-cols-3 gap-[6px] text-center text-[10px] font-semibold">
      {PERF.map((p) => <div key={p.l} className={`${p.bg} h-10 rounded pt-[3px] leading-[15px]`}><div className="text-[#29a67c]">{p.v}</div>{p.l}</div>)}
    </div>
  </section>
);

const SideCell: React.FC<{ label: string; badge?: string; children: React.ReactNode }> = ({ label, badge, children }) => (
  <button aria-label={label} className="relative flex h-[38px] w-full shrink-0 items-center justify-center">
    {children}
    {badge && <span className="absolute top-[3px] right-0 rounded-full bg-[#d81f4a] px-1 text-[10px] leading-[14px] text-white">{badge}</span>}
  </button>
);

const SideBar: React.FC = () => (
  <aside className="ml-[3px] flex w-9 shrink-0 flex-col bg-[#0f0f0f] pt-[1px] pr-[3px] text-[#cfcfcf]">
    <SideCell label="İzleme listesi"><span className="flex h-8 w-8 items-center justify-center rounded-md bg-[#3a3a3a]"><Watch /></span></SideCell>
    <SideCell label="Alarmlar"><Alarm size="size-6" /></SideCell>
    <SideCell label="Katmanlar"><TwoLayers /></SideCell>
    <SideCell label="Sohbet"><MessagesSquare className="size-[22px]" strokeWidth={1.1} /></SideCell>
    <div className="flex-1" />
    <SideCell label="Tarayıcı"><Radar /></SideCell>
    <SideCell label="Takvim"><RingCalendar /></SideCell>
    <SideCell label="Akış" badge="99+"><Feed /></SideCell>
    <SideCell label="Bildirimler" badge="21"><BellTool /></SideCell>
    <SideCell label="Ürünler">
      <span className="flex size-7 shrink-0 items-center justify-center rounded-full bg-[#f2f2f2]"><svg viewBox="0 0 15 15" className="size-[15px]" fill="#111"><path d="M0 0h3v3H0zM6 0h3v3H6zM12 0h3v3h-3zM0 6h3v3H0zM6 6h3v3H6zM12 6h3v3h-3zM0 12h3v3H0zM6 12h3v3H6zM12 12h3v3h-3z" /></svg></span>
    </SideCell>
    <div className="mx-[2px] mt-1 mb-[3px] h-px shrink-0 bg-[#4a4a4a]" />
    <SideCell label="Yardım"><Question /></SideCell>
  </aside>
);

const Taskbar: React.FC = () => (
  <footer className="flex h-8 shrink-0 overflow-hidden bg-[#fdebcf] font-['Open_Sans',sans-serif] text-[10px] leading-[13px] text-[#4a4038]">
    <div className="flex w-[289px] pl-3 pt-[7px]">
      <svg viewBox="0 0 24 24" className="-mt-[2px] size-6"><path d="M4 19a4 4 0 0 1 0-8 6 6 0 0 1 11-2 5 5 0 0 1 2 10z" fill="#a9c6f0" /><circle cx="17" cy="7" r="6.500" fill="#b3181c" /><text x="17" y="10.500" textAnchor="middle" fontSize="9" fill="#fff">8</text></svg>
      <p className="ml-[3px]">8°C<br />Bulutlu</p>
    </div>
    <button aria-label="Başlat" className="mt-[11px] ml-[3px] grid size-5 grid-cols-2 gap-px"><i className="size-full bg-[#2d9fe0]" /><i className="size-full bg-[#2d9fe0]" /><i className="size-full bg-[#1484d3]" /><i className="size-full bg-[#1484d3]" /></button>
    <label className="mt-2 ml-[13px] flex h-6 w-[180px] items-center rounded-full bg-[#fff8ec] pl-[7px]">
      <Search className="size-[13px]" />
      <input aria-label="Ara" placeholder="Ara" className="ml-2 w-24 bg-transparent text-[11px] outline-none placeholder:text-[#5d5349]" />
    </label>
    <div className="ml-[3px] grid w-[440px] grid-cols-12 justify-items-center pt-[11px]">
      <svg viewBox="0 0 20 20" className="size-5"><path d="M0 5h13v13H0z" fill="#2a2522" /><path d="M5 2h14v11H5z" fill="#d4cfca" /></svg>
      <Copilot /><Store /><Chrome /><Edge /><Explorer />
      <FaSpotify className="size-5 text-[#27c95c]" />
      <span className="flex size-5 items-center justify-center rounded-full bg-[#5563e0]"><FaDiscord className="size-[14px] text-white" /></span>
      <span className="relative"><Chrome /><span className="absolute -top-1 -right-[5px] flex size-3 items-center justify-center rounded-full bg-[#5b3c33] text-[8px] text-[#e9d8cf]">Y</span></span>
      <Notepad /><Quote /><span className="-mt-[3px]"><Obs /></span>
    </div>
    <div className="ml-auto flex h-full items-center pt-[10px] text-[#2d2723]">
      <span className="flex w-[27px] justify-center"><ChevronUp className="size-3" /></span>
      <span className="flex w-[27px] justify-center"><svg viewBox="0 0 13 13" className="size-[13px]"><path d="M0 0h13v13H0z" fill="#28332a" /><path d="M1 3h11" stroke="#7fa34e" strokeWidth="2" /><path d="M1 6.500h11" stroke="#9e4d8b" strokeWidth="2" /><path d="M1 10h11" stroke="#3f7f4c" strokeWidth="2" /></svg></span>
      <span className="relative flex w-[27px] justify-center"><RefreshCw className="size-[14px]" strokeWidth={1.5} /><i className="absolute right-[5px] bottom-0 size-[7px] rounded-full bg-[#2b7de0]" /></span>
      <span className="flex w-[26px] justify-center"><Mic className="size-[13px] text-[#1f4a80]" /></span>
      <span className="w-[38px] text-center">TUR</span>
      <span className="flex w-[25px] justify-center"><Wifi className="size-[14px]" /></span>
      <Volume2 className="size-[13px]" />
      <BatteryCharging className="ml-[7px] size-[14px]" />
    </div>
    <p className="w-[62px] pt-[7px] text-right">16:16<br />10.11.2025</p>
    <div className="w-4" />
  </footer>
);

const App: React.FC = () => (
  <div className="flex h-screen w-full flex-col overflow-hidden bg-black pt-[9px] pr-[3px] font-['Lato','Open_Sans',sans-serif]">
    <BrowserBar />
    <TopToolbar />
    <div className="h-1 shrink-0 bg-[#2b2b2b]" />
    <div className="flex min-h-0 flex-1 bg-[#2b2b2b]">
      <LeftTools />
      <div className="w-1 shrink-0" />
      <ChartPanel />
      <div className="relative w-1 shrink-0">
        <button aria-label="Paneli kapat" className="absolute bottom-[46px] left-0 z-10 flex h-6 w-[7px] items-center rounded-r border border-[#333] bg-[#0f0f0f] text-[#bbb]"><ChevronRight className="size-2 shrink-0" /></button>
      </div>
      <div className="flex w-[168px] shrink-0 flex-col bg-[#0f0f0f]">
        <Watchlist />
        <Details />
      </div>
      <SideBar />
    </div>
    <Taskbar />
  </div>
);

export default App;
